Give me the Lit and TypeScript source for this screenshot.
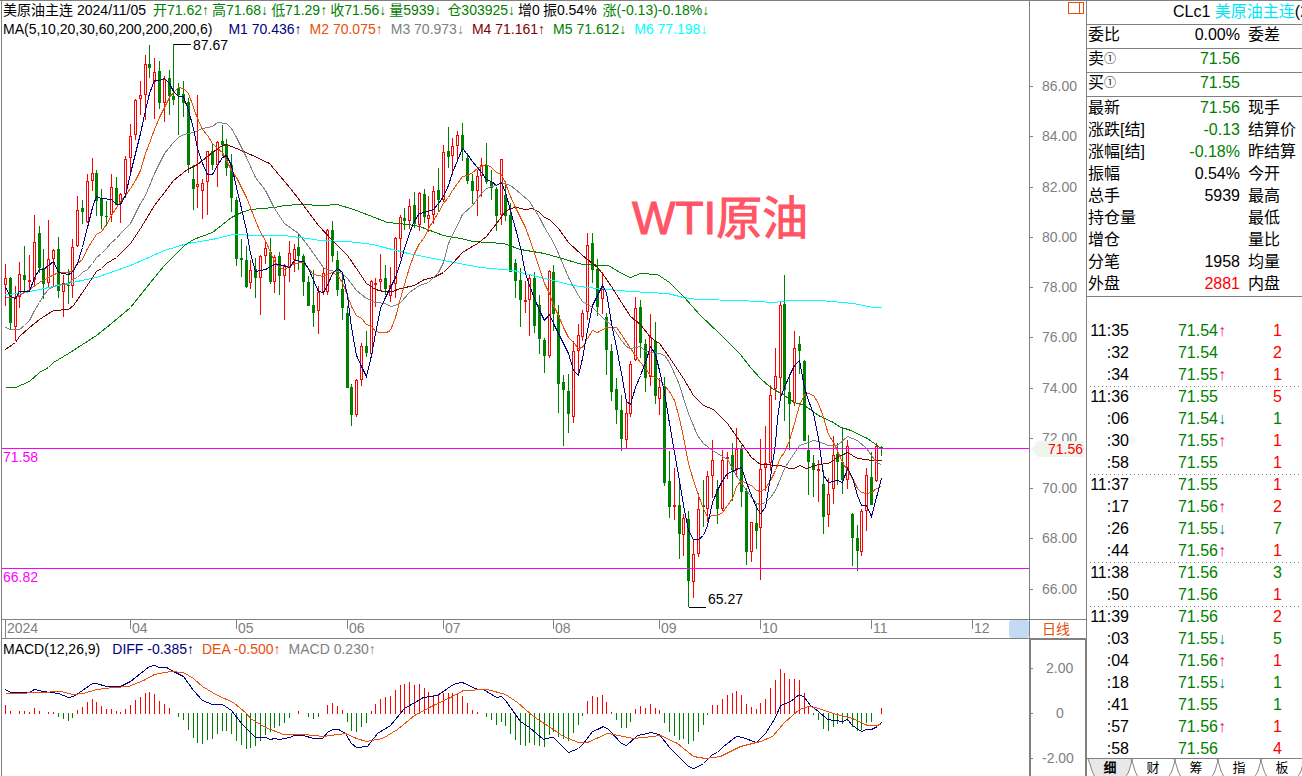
import { LitElement, css, html, svg } from "lit";
import { customElement } from "lit/decorators.js";
import { classMap } from "lit/directives/class-map.js";

type Candle = { x: number; up: boolean; high: number; top: number; bottom: number; low: number };

// One candle per entry: x, direction, high, body top, body bottom, low.
const CANDLES: Candle[] = `
5u 264 278 285 306|10d 277 278 323 329|15u 286 298 327 341|19u 262 274 297 308|24d 246 275 280 292
29u 255 280 282 292|34u 215 242 280 286|39d 226 233 268 273|43d 249 268 284 299|48u 220 259 283 287
53u 249 250 259 287|58d 237 249 291 298|63u 275 283 292 317|68d 269 285 286 304|72u 239 247 286 298
77u 196 210 246 247|82d 200 208 212 224|87u 174 181 222 223|92u 158 173 181 191|96d 170 173 201 216
101d 189 199 216 229|106d 201 216 217 226|111u 174 187 215 222|116d 177 188 205 205|120u 193 194 203 223
125u 156 159 194 198|130u 124 136 158 171|135u 99 100 135 140|140u 81 95 99 115|145u 55 64 95 120
149d 45 64 68 78|154u 58 72 82 119|159d 61 71 103 109|164u 76 79 103 122|169d 70 78 96 115
173d 44 96 100 105|178d 83 88 95 135|183d 81 94 103 117|188d 98 102 165 173|193d 165 179 189 210
197u 95 184 187 208|202u 179 183 191 219|207u 151 151 182 215|212d 143 151 165 170|217u 141 142 165 187
222d 125 141 145 156|226d 139 145 168 176|231d 154 165 198 212|236d 197 200 259 266|241d 239 258 260 277
246d 246 260 287 288|250u 260 270 283 289|255d 258 269 278 298|260u 255 256 278 315|265u 242 248 256 264
270d 238 252 282 284|274u 255 257 282 293|279d 252 256 276 295|284u 264 265 276 320|289u 241 253 268 282
294u 244 249 260 272|298d 233 247 256 270|303d 254 256 282 296|308d 276 282 306 306|313d 270 305 313 327
318u 286 292 311 334|323u 267 273 292 295|327u 229 230 292 295|332d 221 230 256 262|337d 251 260 290 296
342d 274 289 308 320|347d 306 313 388 388|351d 384 387 415 426|356u 379 380 415 417|361u 343 346 380 386
366d 331 346 353 357|371u 280 281 354 355|375u 278 283 284 307|380u 254 279 282 291|385d 265 278 289 295
390u 267 285 296 302|395u 237 238 284 298|400u 215 217 239 258|404d 208 218 221 230|409u 199 206 221 229
414d 192 205 224 228|419u 192 193 225 231|424d 189 194 217 223|428u 196 215 219 232|433u 186 191 215 224
438d 168 190 200 212|443u 145 152 200 202|448d 127 151 157 168|452u 138 146 156 175|457u 131 135 146 162
462d 123 135 150 161|467d 153 158 181 184|472d 174 181 191 204|477u 170 176 191 216|481u 158 165 176 197
486d 143 165 182 184|491d 170 182 188 200|496d 187 189 216 231|501u 159 159 215 225|505d 181 195 216 221
510d 203 215 272 272|515d 259 263 281 298|520d 268 280 300 327|525u 281 300 301 313|529u 275 278 300 336
534d 272 278 326 333|539d 295 305 339 354|544d 338 340 356 373|549u 270 271 356 358|553d 265 272 314 331
558d 305 315 384 413|563d 375 382 390 446|568d 374 391 414 433|573u 341 351 417 423|578u 324 335 351 374
582u 310 313 337 341|587u 233 245 312 320|592d 233 243 270 283|597d 259 269 307 316|602u 272 289 299 314
606d 313 317 350 375|611d 344 351 392 401|616d 378 389 410 424|621d 395 410 439 451|626u 401 413 440 448
630u 361 364 414 417|635u 297 308 360 361|640d 300 307 343 358|645d 339 344 378 392|650u 314 337 377 386
655d 322 341 396 404|659u 378 387 399 415|664d 377 386 483 486|669d 451 481 507 518|674u 468 505 506 520
679d 482 505 534 559|683u 514 518 535 556|688d 511 519 581 607|693u 540 554 582 598|698u 493 509 554 557
703d 480 505 507 527|707u 471 476 509 522|712u 440 460 476 498|717d 480 489 509 524|722u 450 460 509 511
727u 452 457 458 479|732d 443 455 470 501|736u 428 449 469 477|741d 445 449 492 507|746d 488 491 552 565
751u 522 522 552 562|756d 504 523 531 549|760u 439 469 528 580|765u 426 463 468 491|770u 385 395 463 471
775u 348 376 389 400|780u 301 305 378 397|784d 275 304 390 421|789d 375 392 404 450|794u 331 348 403 406
799d 336 344 351 374|804d 360 361 441 441|808d 435 450 462 495|813d 455 463 470 497|818u 460 469 471 502
823d 470 484 517 534|828u 478 494 515 527|833u 436 455 489 504|837d 443 454 462 485|842d 429 462 480 494
847u 440 446 480 489|852d 513 514 538 566|857d 525 538 551 571|861u 509 511 552 556|866u 468 475 511 531
871d 452 477 505 505|876u 443 446 481 482|881d 446 447 449 456`
  .trim()
  .split(/[|\n]/)
  .map((entry) => {
    const [head, high, top, bottom, low] = entry.split(" ");
    return { x: parseInt(head), up: head.endsWith("u"), high: +high, top: +top, bottom: +bottom, low: +low };
  });

const AVERAGES: { tone: string; points: string }[] = [
  {
    tone: "m6",
    points:
      "5,294 20,293 39,289 67,283 96,277 130,265 164,250 187,243 212,239 233,234 257,235 283,235 300,237 320,240 347,241 373,244 380,246 408,253 443,260 480,267 513,270 544,278 573,285 587,287 630,291 667,293 683,297 697,299 740,300 773,302 790,300 820,300 853,303 873,307 881,307",
  },
  {
    tone: "m5",
    points:
      "5,387 15,387 29,381 39,372 48,367 53,362 68,353 82,344 96,335 111,323 130,307 154,277 164,265 184,245 193,239 212,232 231,217 241,212 250,209 274,207 284,205 300,204 323,205 337,204 356,210 387,222 408,224 419,226 443,235 460,238 473,241 503,243 520,249 544,253 558,257 582,264 608,265 621,273 630,277 640,273 657,274 669,282 683,296 700,315 719,333 740,354 750,367 760,378 770,387 784,395 794,402 804,405 818,415 833,422 840,427 848,429 867,438 878,446 881,448",
  },
  {
    tone: "m4",
    points:
      "5,349 15,342 19,336 29,327 39,319 53,310 68,309 73,305 82,292 96,271 101,268 106,263 116,257 130,243 140,228 154,205 164,192 173,180 187,169 197,164 212,152 222,145 226,144 236,148 250,154 269,163 279,175 290,188 300,201 318,225 332,240 347,255 356,268 366,283 375,289 383,291 392,291 400,288 414,285 424,279 433,277 443,272 452,263 462,252 477,243 486,236 496,223 505,211 510,208 516,207 525,209 532,208 539,212 544,217 549,219 558,228 568,242 582,255 597,267 602,273 611,286 621,302 630,316 640,324 650,337 659,343 669,357 683,378 693,395 703,405 713,409 727,423 741,443 751,457 760,464 780,465 789,468 794,468 799,465 806,468 818,464 828,463 837,457 847,452 857,458 866,459 871,460 881,460",
  },
  {
    tone: "m3",
    points:
      "5,327 10,329 19,329 24,325 29,320 34,310 39,302 43,295 48,289 53,286 58,284 68,284 72,279 77,277 82,272 87,269 92,263 96,257 101,253 106,248 111,242 116,238 120,233 130,223 135,213 140,203 145,195 154,173 164,153 173,142 178,137 183,134 193,132 202,128 212,126 217,122 226,123 231,128 236,137 246,157 255,177 265,190 274,208 284,223 298,233 308,246 323,267 328,270 337,271 342,273 347,278 356,290 366,298 375,302 385,303 390,306 395,305 400,302 409,292 419,285 428,282 433,277 438,272 443,262 448,243 462,214 472,205 481,193 486,188 491,186 496,185 501,182 510,185 520,193 529,201 539,217 544,227 553,242 558,253 568,277 578,295 582,301 592,307 602,317 611,325 621,340 626,346 630,348 640,346 645,351 659,353 664,355 669,362 678,382 688,413 697,435 703,443 712,450 727,459 736,475 746,490 756,503 760,504 765,502 770,497 775,490 780,478 784,468 789,460 799,445 808,442 813,440 818,441 828,445 837,445 847,436 857,440 866,448 871,455 876,462 881,464",
  },
  {
    tone: "m2",
    points:
      "5,297 15,297 24,292 29,289 39,282 48,277 58,272 68,272 72,270 77,263 82,259 87,248 92,240 96,234 101,231 106,224 111,215 120,201 125,195 130,188 135,180 140,170 145,153 150,140 154,129 159,117 164,107 169,97 173,92 178,87 183,88 188,93 193,107 197,118 202,129 207,135 212,143 217,148 222,152 226,160 231,170 236,177 246,197 250,207 255,220 260,232 265,240 270,252 274,261 279,267 284,269 294,263 303,262 308,268 313,274 323,276 332,272 337,275 342,282 347,295 351,306 356,315 361,318 366,324 371,326 375,331 380,332 386,332 390,330 395,317 400,298 404,284 409,267 414,253 419,243 424,237 428,228 433,220 438,212 443,203 448,197 452,190 457,183 462,176 467,175 472,172 477,168 481,166 486,164 491,167 496,172 501,174 505,183 510,196 515,207 520,217 525,227 529,238 534,253 539,268 544,283 549,293 553,305 558,315 563,327 568,337 573,342 578,348 582,347 587,338 592,330 597,332 606,327 616,327 621,334 630,348 635,355 640,362 645,368 650,375 659,379 664,385 669,391 674,400 679,418 683,437 688,463 693,480 698,495 703,508 707,517 712,515 717,515 722,512 727,505 732,498 736,486 741,480 746,483 751,485 756,490 760,491 765,488 770,480 775,470 780,457 784,452 789,440 794,423 799,405 804,394 808,393 813,395 818,403 823,417 828,434 833,442 837,450 842,462 847,470 852,478 857,488 861,492 866,493 871,492 876,488 881,486",
  },
  {
    tone: "m1",
    points:
      "5,287 10,296 15,298 19,291 29,291 34,277 39,269 43,269 48,265 53,261 58,272 68,274 72,272 77,263 82,247 87,227 92,207 96,196 101,198 111,199 116,204 120,204 125,195 130,173 135,153 140,133 145,110 149,93 154,80 159,80 164,78 169,83 173,91 178,96 183,96 188,110 193,128 197,148 202,163 207,174 212,174 217,165 222,157 226,155 231,165 236,187 241,208 246,230 250,253 255,271 260,270 265,269 274,264 279,264 289,267 294,260 303,261 308,268 313,280 318,291 323,292 327,285 332,273 337,268 342,272 347,295 351,327 356,355 361,366 366,376 371,355 375,333 380,308 385,297 390,287 395,277 400,262 404,248 409,233 414,220 419,213 424,212 433,209 438,203 443,196 448,185 452,172 457,160 462,148 467,154 472,161 481,172 486,179 491,181 496,185 501,182 505,192 510,210 515,228 520,247 525,273 529,285 534,298 539,310 544,320 549,314 553,323 558,333 568,353 573,370 578,375 582,358 587,330 592,305 597,295 602,285 606,292 611,323 616,347 621,373 626,401 630,404 635,387 640,375 645,362 650,346 655,354 659,370 664,392 669,423 674,452 679,480 683,505 688,530 693,539 698,539 703,535 707,525 712,502 717,490 722,480 727,473 732,471 736,469 741,467 746,482 751,495 756,507 760,513 765,507 770,477 775,443 777,418 780,397 784,387 789,375 794,365 799,360 804,387 808,400 813,413 818,438 823,475 828,482 837,480 842,482 847,468 852,477 857,495 861,505 866,505 871,516 876,497 881,478",
  },
];

// x position and signed bar height of the MACD histogram.
const HISTOGRAM: [number, number][] = `
5:8 10:2 19:2 24:2 29:1 34:5 39:2 48:1 53:1 58:-3 63:-5 68:-7 72:-4 77:3 82:6 87:11 92:14 96:11 101:7 106:4 111:4 116:2
120:1 125:4 130:8 135:13 140:16 145:20 149:21 154:19 159:12 164:9 169:5 178:-3 183:-6 188:-16 193:-24 197:-29 202:-30
207:-26 212:-25 217:-20 222:-17 226:-17 231:-20 236:-27 241:-31 246:-35 250:-34 255:-32 260:-27 265:-21 270:-18 274:-14
279:-12 284:-9 289:-4 298:2 308:-3 313:-5 318:-3 327:8 332:10 337:7 342:3 347:-8 351:-17 356:-18 361:-13 366:-9 371:2
375:9 380:14 385:16 390:17 395:23 400:28 404:29 409:31 414:28 419:29 424:25 428:21 433:18 438:19 443:20 448:20 452:20
457:20 462:17 467:10 472:3 477:1 486:-3 491:-6 496:-11 501:-8 505:-12 510:-20 515:-26 520:-31 525:-32 529:-29 534:-31
539:-32 544:-33 549:-21 553:-18 558:-23 563:-25 568:-27 573:-19 578:-11 582:-2 587:12 592:17 597:16 602:18 606:11 611:1
616:-6 621:-14 626:-14 630:-8 635:4 640:7 645:5 650:9 655:5 659:3 664:-9 669:-18 674:-22 679:-26 683:-25 688:-30 693:-27
698:-18 703:-11 707:-1 712:8 717:8 722:14 727:18 732:20 736:22 741:18 746:9 751:6 756:4 760:10 765:14 770:25 775:33
780:44 784:40 789:34 794:34 799:33 804:20 808:7 813:-1 818:-6 823:-15 828:-17 833:-13 837:-10 842:-10 847:-7 852:-13
857:-17 861:-16 866:-9 871:-8 881:5`
  .trim()
  .split(/\s+/)
  .map((pair) => pair.split(":").map(Number) as [number, number]);

const DIFF =
  "5,689 10,692 29,692 34,689 43,691 58,693 68,697 73,696 82,690 92,683 96,683 106,686 120,686 130,681 140,673 149,666 154,665 159,667 166,667 173,671 183,676 193,690 202,700 212,704 222,704 231,710 241,723 255,737 265,737 270,739 274,738 279,739 289,737 294,735 303,735 313,738 322,738 328,731 333,729 338,729 345,733 351,743 356,747 367,746 377,733 390,725 404,708 423,697 437,695 450,686 455,683 462,682 477,689 483,689 496,697 501,696 505,700 520,721 529,727 543,739 550,737 553,737 568,752 573,750 578,748 583,743 592,731 597,729 603,726 608,729 621,743 626,745 637,735 643,734 650,732 659,734 669,747 688,766 693,768 698,766 703,763 712,754 717,752 723,746 736,736 742,737 756,742 765,733 775,717 780,705 790,701 799,694 804,697 810,705 818,711 827,719 842,721 847,719 852,725 861,731 866,729 871,729 877,726 881,722";
const DEA =
  "5,693 15,693 39,692 60,691 73,694 83,693 96,689 113,687 128,686 143,680 154,674 170,671 183,672 193,678 202,686 217,695 233,702 246,713 250,718 265,727 283,734 303,734 323,736 345,733 356,738 366,741 382,738 397,729 414,715 433,705 450,697 463,690 487,689 505,694 517,702 533,716 550,727 563,736 578,742 587,742 607,733 613,734 633,738 643,737 660,735 677,743 693,756 705,758 720,756 740,746 760,741 772,736 784,722 799,709 808,706 815,707 833,713 852,718 867,725 875,725 881,724";

const PRICES: [string, number][] = [
  ["86.00", 86], ["84.00", 136], ["82.00", 187], ["80.00", 237], ["78.00", 287], ["76.00", 337],
  ["74.00", 388], ["72.00", 438], ["70.00", 488], ["68.00", 538], ["66.00", 589],
];

const MONTHS: [string, number][] = [
  ["2024", 5], ["04", 130], ["05", 236], ["06", 347], ["07", 443], ["08", 553], ["09", 659], ["10", 760], ["11", 871], ["12", 972],
];

const DAY_FIELDS: [string, string][] = [
  ["开71.62↑", "green"], ["高71.68↓", "green"], ["低71.29↑", "green"], ["收71.56↓", "green"], ["量5939↓", "green spaced"],
  ["仓303925↓", "green"], ["增0", "black"], ["振0.54%", "black spaced"], ["涨(-0.13)-0.18%↓", "green"],
];

const AVERAGE_FIELDS: [string, string][] = [
  ["M1 70.436↑", "m1"], ["M2 70.075↑", "m2"], ["M3 70.973↓", "m3"], ["M4 71.161↑", "m4"], ["M5 71.612↓", "m5"], ["M6 77.198↓", "m6"],
];

const QUOTES: [string, string, string, string][] = [
  ["最新", "71.56", "green", "现手"], ["涨跌[结]", "-0.13", "green", "结算价"], ["涨幅[结]", "-0.18%", "green", "昨结算"],
  ["振幅", "0.54%", "black", "今开"], ["总手", "5939", "black", "最高"], ["持仓量", "", "black", "最低"],
  ["增仓", "", "black", "量比"], ["分笔", "1958", "black", "均量"], ["外盘", "2881", "red", "内盘"],
];

const TRADES: [string, string, string, string, string][] = [
  ["11:35", "71.54", "↑", "1", "red"], [":32", "71.54", "", "2", "red"], [":34", "71.55", "↑", "1", "red"],
  ["11:36", "71.55", "", "5", "red"], [":06", "71.54", "↓", "1", "green"], [":30", "71.55", "↑", "1", "red"],
  [":58", "71.55", "", "1", "red"], ["11:37", "71.55", "", "1", "red"], [":17", "71.56", "↑", "2", "red"],
  [":26", "71.55", "↓", "7", "green"], [":44", "71.56", "↑", "1", "red"], ["11:38", "71.56", "", "3", "green"],
  [":50", "71.56", "", "1", "red"], ["11:39", "71.56", "", "2", "red"], [":03", "71.55", "↓", "5", "green"],
  [":04", "71.56", "↑", "1", "red"], [":18", "71.55", "↓", "1", "green"], [":41", "71.55", "", "1", "green"],
  [":57", "71.56", "↑", "1", "red"], [":58", "71.56", "", "4", "red"],
];

const tones = css`
  .black { color: #000; }
  .green { color: #008000; }
  .red { color: #f00; }
  .m1 { color: #000080; }
  .m2 { color: #e8500a; }
  .m3 { color: #808080; }
  .m4 { color: #800000; }
  .m5 { color: #008000; }
  .m6 { color: #0ff; }
`;

@customElement("price-chart")
class PriceChart extends LitElement {
  static styles = [
    tones,
    css`
      :host {
        display: grid;
        grid-template-columns: minmax(0, 1027fr) minmax(0, 57fr);
        align-content: start;
        border-left: 1px solid #808080;
        font-size: 14px;
        line-height: 18px;
      }
      svg { display: block; width: 100%; }
      text { font-size: 14px; }
      .plot { min-width: 0; border-bottom: 1px solid #808080; }
      .scale { border-left: 1px solid #808080; border-bottom: 1px solid #808080; }
      .fields { display: flex; gap: 3px; padding-left: 1px; white-space: nowrap; overflow: hidden; }
      .title { margin-right: 1px; }
      .date { margin-right: 4px; }
      .spaced { margin-right: 3px; }
      .averages { gap: 8px; padding-top: 1px; }
      .averages .title { margin-right: 8px; }
      .sharp { shape-rendering: crispEdges; }
      .body-up { fill: #fff; stroke: #f00; }
      .wick-up { stroke: #f00; }
      .body-down { fill: #008000; }
      .wick-down { stroke: #008000; }
      .curve { fill: none; stroke: currentColor; }
      .level { stroke: #f0f; }
      .level-text { fill: #f0f; }
      .leader { fill: none; stroke: #000; }
      .banner { fill: #ff5566; stroke: #ff5566; font-size: 46px; }
      .tick { stroke: #808080; }
      .muted { fill: #808080; }
      .tag { fill: #edf5ed; }
      .tag-text { fill: #f00; }
      .window-icon { fill: none; stroke: #e8500a; }
      .handle { fill: #c3daf5; }
      .period {
        display: flex;
        align-items: center;
        padding: 0 12px;
        border: 0;
        border-left: 1px solid #808080;
        border-bottom: 1px solid #808080;
        background: none;
        color: #e8500a;
        font: inherit;
      }
      .macd { border-bottom: 0; padding-top: 1px; }
      .macd-fields { gap: 8px; }
      .macd-fields .title { margin-right: 4px; }
      .macd-scale { border: 2px solid #808080; border-width: 1px 1px 0 2px; }
    `,
  ];

  render() {
    return html`
      <div class="plot">
        <div class="fields">
          <span class="title">美原油主连</span><span class="date">2024/11/05</span>
          ${DAY_FIELDS.map(([text, tone]) => html`<span class=${tone}>${text}</span>`)}
        </div>
        <div class="fields averages">
          <span class="title">MA(5,10,20,30,60,200,200,200,6)</span>
          ${AVERAGE_FIELDS.map(([text, tone]) => html`<span class=${tone}>${text}</span>`)}
        </div>
        <svg viewBox="2 38 1027 581" role="img" aria-label="日线图">
          <g class="sharp">
            ${CANDLES.map((c) =>
              c.up
                ? svg`<path class="wick-up" d="M${c.x + 0.5} ${c.high}V${c.low}" /><rect class="body-up" x=${c.x - 0.5} y=${c.top + 0.5} width="2" height=${Math.max(c.bottom - c.top - 1, 1)} />`
                : svg`<path class="wick-down" d="M${c.x + 0.5} ${c.high}V${c.low}" /><rect class="body-down" x=${c.x - 1} y=${c.top} width="3" height=${c.bottom - c.top} />`
            )}
            ${AVERAGES.map((a) => svg`<polyline class="curve ${a.tone}" transform="translate(0.5 0.5)" points=${a.points} />`)}
            <path class="level" d="M2 448.5H1029M2 568.5H1029" />
            <path class="leader" d="M173.500 44.500H191M688.500 607.500H706" />
          </g>
          <text class="level-text" x="3" y="462">71.58</text>
          <text class="level-text" x="3" y="582">66.82</text>
          <text x="193" y="50">87.67</text>
          <text x="708" y="604">65.27</text>
          <text class="banner" x="632" y="234">WTI原油</text>
        </svg>
      </div>
      <div class="scale">
        <svg viewBox="1030 0 56 618">
          <g class="sharp">
            <path class="window-icon" d="M1068.500 1.500H1083.500V12.500H1068.500ZM1079.500 1.500V12.500" />
            ${PRICES.map(([, y]) => svg`<path class="tick" d="M1030 ${y - 0.5}h3" />`)}
          </g>
          ${PRICES.map(([label, y]) => svg`<text class="muted" x="1042" y=${y + 4}>${label}</text>`)}
          <path class="tag" d="M1031 448L1038 440H1084V456H1038Z" />
          <text class="tag-text" x="1048" y="453">71.56</text>
        </svg>
      </div>
      <div class="plot">
        <svg viewBox="2 620 1027 18">
          <g class="sharp">
            ${MONTHS.map(([, x], i) => svg`<path class="tick" d="M${x + 0.5} 620v${i ? 9 : 18}" />`)}
          </g>
          <rect class="handle" x="1009" y="620" width="20" height="18" rx="3" />
          ${MONTHS.map(([label, x]) => svg`<text class="muted" x=${x + 2} y="633">${label}</text>`)}
        </svg>
      </div>
      <button class="period">日线</button>
      <div class="plot macd">
        <div class="fields macd-fields">
          <span class="title">MACD(12,26,9)</span><span class="m1">DIFF -0.385↑</span><span class="m2">DEA -0.500↑</span
          ><span class="m3">MACD 0.230↑</span>
        </div>
        <svg viewBox="2 658 1027 118" role="img" aria-label="MACD">
          <g class="sharp">
            ${HISTOGRAM.map(([x, h]) =>
              h > 0
                ? svg`<path class="wick-up" d="M${x + 0.5} 714V${714 - h - 1}" />`
                : svg`<path class="wick-down" d="M${x + 0.5} 713V${713 - h + 1}" />`
            )}
            <polyline class="curve m1" transform="translate(0.5 0.5)" points=${DIFF} />
            <polyline class="curve m2" transform="translate(0.5 0.5)" points=${DEA} />
          </g>
        </svg>
      </div>
      <div class="macd-scale">
        <svg viewBox="1031 640 54 136">
          <path class="tick sharp" d="M1031 668.500h2M1031 713.500h2M1031 758.500h2" />
          <text class="muted" x="1046" y="673">2.00</text>
          <text class="muted" x="1056" y="718">0</text>
          <text class="muted" x="1042" y="763">-2.00</text>
        </svg>
      </div>
    `;
  }
}

@customElement("quote-panel")
class QuotePanel extends LitElement {
  static styles = [
    tones,
    css`
      :host {
        display: block;
        overflow: hidden;
        border-left: 1px solid #808080;
        font-size: 16px;
        line-height: 22px;
        white-space: nowrap;
      }
      .name { height: 23px; padding-left: 86px; border-bottom: 1px solid #808080; font-weight: 400; font-size: 16px; margin: 0; }
      .name span { color: #00e5f5; }
      table { border-collapse: collapse; table-layout: fixed; width: 240px; }
      td, th { padding: 0; font-weight: 400; text-align: left; height: 22px; }
      .label { width: 62px; padding-left: 1px; }
      .value { width: 90px; text-align: right; }
      .second { padding-left: 8px; }
      .ruled tr { border-bottom: 1px solid #808080; }
      .ruled td, .ruled th { height: 23px; line-height: 20px; vertical-align: top; }
      .ruled small { font-size: 12px; line-height: 1; vertical-align: 1px; color: #222; }
      .quotes { padding-bottom: 1px; border-bottom: 1px solid #808080; margin-bottom: 23px; }
      .minute {
        background: repeating-linear-gradient(90deg, #808080 0 1px, transparent 1px 4px) 3px 0 / 100% 1px no-repeat;
      }
      .time { width: 42px; text-align: right; }
      .price { width: 89px; text-align: right; }
      .move { width: 10px; }
      .rise { color: #f0187a; }
      .fall { color: #008a8a; }
      .volume { width: 54px; text-align: right; }
      .tabs { display: flex; isolation: isolate; border-top: 1px solid #808080; margin-top: -2px; }
      .tab {
        position: relative;
        flex: 0 0 43px;
        height: 18px;
        padding: 0 0 0 3px;
        border: 0;
        background: none;
        font: inherit;
        font-size: 13px;
        line-height: 18px;
      }
      .tab svg { position: absolute; inset: 0; z-index: -1; }
      .tab path { fill: none; stroke: #808080; }
      .tab.active { font-weight: 700; }
      .tab.active path { fill: #e8e8e8; }
    `,
  ];

  render() {
    return html`
      <h1 class="name">CLc1 <span>美原油主连</span>(2412)</h1>
      <table class="ruled">
        <tr><th class="label">委比</th><td class="value">0.00%</td><td class="second">委差</td></tr>
        <tr><th class="label">卖<small>①</small></th><td class="value green">71.56</td><td></td></tr>
        <tr><th class="label">买<small>①</small></th><td class="value green">71.55</td><td></td></tr>
      </table>
      <div class="quotes">
        <table>
          ${QUOTES.map(
            ([label, value, tone, second]) => html`<tr>
              <th class="label">${label}</th><td class="value ${tone}">${value}</td><td class="second">${second}</td>
            </tr>`
          )}
        </table>
      </div>
      <table>
        ${TRADES.map(
          ([time, price, move, volume, tone], i) => html`<tr class=${classMap({ minute: i > 0 && time.length > 3 })}>
            <td class="time">${time}</td><td class="price green">${price}</td>
            <td class="move ${move === "↑" ? "rise" : "fall"}">${move}</td><td class="volume ${tone}">${volume}</td><td></td>
          </tr>`
        )}
      </table>
      <nav class="tabs">
        ${["细", "财", "筹", "指", "板"].map(
          (label, i) => html`<button class=${classMap({ tab: true, active: i === 0 })}>
            <svg width="46" height="18" viewBox="0 0 46 18">
              <path d="M1 0C4 6 4 12 8 18H38C43 14 43 5 46 0" />
            </svg>${label}
          </button>`
        )}
      </nav>
    `;
  }
}

@customElement("app-root")
class AppRoot extends LitElement {
  static styles = css`
    :host {
      display: grid;
      grid-template-columns: minmax(0, 1fr) 216px;
      height: 100vh;
      overflow: hidden;
      box-sizing: border-box;
      padding-left: 1px;
      border-top: 1px solid #808080;
      background: #fff;
      color: #000;
      font-family: "Liberation Sans", "Noto Sans CJK SC", sans-serif;
    }
  `;

  render() {
    return html`<price-chart></price-chart><quote-panel></quote-panel>`;
  }
}
